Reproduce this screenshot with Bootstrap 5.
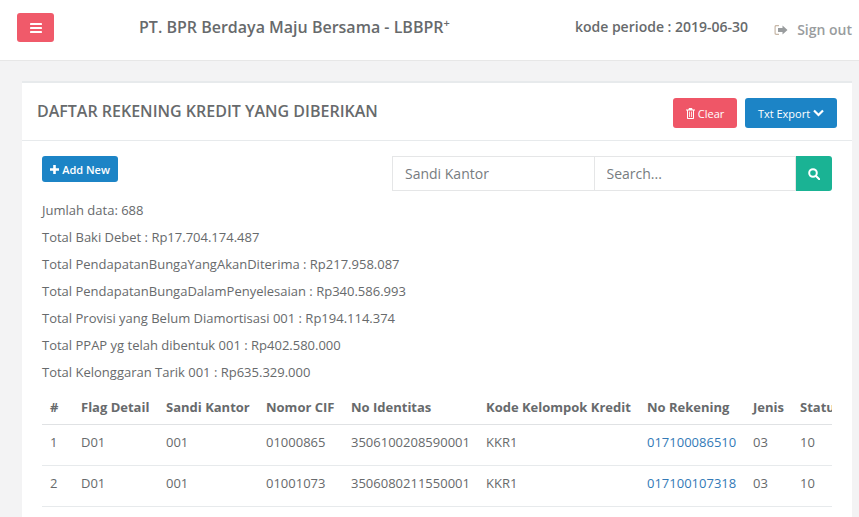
<!DOCTYPE html>
<html lang="id">
<head>
<meta charset="utf-8">
<title>Daftar Rekening Kredit</title>
<link href="https://cdn.jsdelivr.net/npm/bootstrap@5.3.0/dist/css/bootstrap.min.css" rel="stylesheet">
<style>
html,body{height:100%;overflow:hidden}
body{font-family:"Open Sans",sans-serif;font-size:13px;color:#676a6c;background:#f3f3f4;line-height:17px;display:flex;flex-direction:column}
.topbar{flex:0 0 61px;background:#fff;border-bottom:1px solid #e7e7e7;padding:13px 7px 0 17px;align-items:flex-start}
.btn-menu{width:37px;height:29px;padding:0;background:#f05a6a;border:0;border-radius:3px;color:#fff;display:flex;align-items:center;justify-content:center}
.brand-name{font-size:16px;font-weight:600;margin-left:85px;line-height:28px;color:#676a6c}
.brand-name sup{font-size:11px;top:-.55em;line-height:0}
.periode{font-size:14px;font-weight:600;line-height:28px;margin-left:auto;margin-right:26px}
.signout{font-size:14px;font-weight:600;color:#999c9e;line-height:34px;text-decoration:none;display:flex;align-items:center;gap:9px}
.panel{margin:20px 7px 0 22px;background:#fff;border-top:2px solid #e7eaec;flex:1 1 auto;overflow:hidden}
.panel-head{height:58px;padding:1px 15px 0;border-bottom:1px solid #e7eaec;display:flex;align-items:center;justify-content:space-between}
.panel-head h5{font-size:16px;font-weight:600;margin:0;color:#676a6c}
.head-btns{gap:8px;margin-top:2px}
.act{font-size:11px;height:30px;border:0;border-radius:3px;color:#fff;padding:0;display:inline-flex;align-items:center;justify-content:center;gap:3px;font-weight:500}
.act-red{width:64px;background:#ef5667}
.act-blue{width:92px;background:#1c84c6}
.panel-body{padding:15px 20px 0}
.add-btn{font-size:11px;height:26px;width:76px;background:#1c84c6;border:0;border-radius:3px;color:#fff;padding:0;display:inline-flex;align-items:center;justify-content:center;gap:3px;font-weight:600}
.find{width:440px;height:35px}
.find .form-control{font-family:inherit;font-size:14px;color:#676a6c;border:1px solid #e5e6e7;border-radius:0;padding:6px 12px;height:35px;box-shadow:none}
.find .form-control+.form-control{margin-left:-1px}
.find .form-control::placeholder{color:#777c80;opacity:1}
.find-btn{flex:0 0 36px;margin-left:0!important;background:#1ab394;border:0;border-radius:0 3px 3px 0;color:#fff;padding:0;display:flex;align-items:center;justify-content:center}
.stats{margin-top:11px}
.stats p{margin:0 0 10px;line-height:17px}
.tbl-wrap{overflow:hidden}
.tbl{margin:0;width:auto;color:#676a6c;font-size:13px;white-space:nowrap;border-collapse:collapse}
.tbl th,.tbl td{padding:5px 8px 11px;line-height:24px;border-top:0;border-bottom:1px solid #e7eaec;color:#676a6c;box-shadow:none;background:none;box-sizing:border-box}
.tbl th{font-weight:700;border-bottom:1px solid #e0e2e4;padding-top:4px;padding-bottom:5px}
.tbl th:nth-child(1){min-width:31px;width:31px}
.tbl th:nth-child(2){min-width:85px;width:85px}
.tbl th:nth-child(3){min-width:100px;width:100px}
.tbl th:nth-child(4){min-width:85px;width:85px}
.tbl th:nth-child(5){min-width:135px;width:135px}
.tbl th:nth-child(6){min-width:161px;width:161px}
.tbl th:nth-child(7){min-width:106px;width:106px}
.tbl th:nth-child(8){min-width:47px;width:47px}
.tbl a{color:#337ab7;text-decoration:none}
</style>
</head>
<body>
<header class="topbar d-flex">
  <button class="btn-menu" type="button" aria-label="Menu">
    <svg width="12" height="10" viewBox="0 0 12 10" fill="#fff"><rect width="12" height="2" y="0" rx=".4"/><rect width="12" height="2" y="4" rx=".4"/><rect width="12" height="2" y="8" rx=".4"/></svg>
  </button>
  <div class="brand-name">PT. BPR Berdaya Maju Bersama - LBBPR<sup>+</sup></div>
  <div class="periode">kode periode : 2019-06-30</div>
  <a class="signout" href="#">
    <svg width="14" height="12" viewBox="0 0 14 12" fill="#999c9e"><path d="M5 1H2.2C1.2 1 .5 1.7.5 2.7v6.6c0 1 .7 1.700 1.700 1.700H5V9.800H2.400c-.4 0-.7-.3-.7-.7V2.900c0-.4.3-.7.7-.7H5z" fill="#c8b8a8"/><path d="M8.500 1.500v2.500H4v4h4.500v2.500L13.500 6z"/></svg>
    Sign out
  </a>
</header>
<main class="panel">
  <div class="panel-head">
    <h5>DAFTAR REKENING KREDIT YANG DIBERIKAN</h5>
    <div class="head-btns d-flex">
      <button class="act act-red" type="button">
        <svg width="9" height="11" viewBox="0 0 9 11" fill="#fff"><path d="M3 0h3l.6 1.500H9v1H8V10c0 .6-.4 1-1 1H2c-.6 0-1-.4-1-1V2.500H0v-1h2.400zM2 2.500V10h5V2.500zM3 3.500h.8V9H3zm2.200 0H6V9h-.8z"/></svg>
        Clear
      </button>
      <button class="act act-blue" type="button">
        Txt Export
        <svg width="11" height="8" viewBox="0 0 11 8" fill="none" stroke="#fff" stroke-width="2.200"><path d="M1 1.500l4.500 4.500L10 1.500"/></svg>
      </button>
    </div>
  </div>
  <div class="panel-body">
    <div class="d-flex justify-content-between align-items-start">
      <button class="add-btn" type="button">
        <svg width="9" height="9" viewBox="0 0 9 9" fill="#fff"><path d="M3.200 0h2.600v3.200H9v2.600H5.800V9H3.200V5.800H0V3.200h3.200z"/></svg>
        Add New
      </button>
      <div class="find input-group flex-nowrap">
        <input class="form-control" type="text" placeholder="Sandi Kantor">
        <input class="form-control" type="text" placeholder="Search...">
        <button class="find-btn" type="button" aria-label="Search">
          <svg width="12" height="12" viewBox="0 0 12 12" fill="none" stroke="#fff" stroke-width="2"><circle cx="5" cy="5" r="3.800"/><path d="M8 8l3.300 3.300" stroke-linecap="round"/></svg>
        </button>
      </div>
    </div>
    <div class="stats">
      <p>Jumlah data: 688</p>
      <p>Total Baki Debet : Rp17.704.174.487</p>
      <p>Total PendapatanBungaYangAkanDiterima : Rp217.958.087</p>
      <p>Total PendapatanBungaDalamPenyelesaian : Rp340.586.993</p>
      <p>Total Provisi yang Belum Diamortisasi 001 : Rp194.114.374</p>
      <p>Total PPAP yg telah dibentuk 001 : Rp402.580.000</p>
      <p>Total Kelonggaran Tarik 001 : Rp635.329.000</p>
    </div>
    <div class="tbl-wrap">
      <table class="table tbl">
        <thead>
          <tr><th>#</th><th>Flag Detail</th><th>Sandi Kantor</th><th>Nomor CIF</th><th>No Identitas</th><th>Kode Kelompok Kredit</th><th>No Rekening</th><th>Jenis</th><th>Status</th></tr>
        </thead>
        <tbody>
          <tr><td>1</td><td>D01</td><td>001</td><td>01000865</td><td>3506100208590001</td><td>KKR1</td><td><a href="#">017100086510</a></td><td>03</td><td>10</td></tr>
          <tr><td>2</td><td>D01</td><td>001</td><td>01001073</td><td>3506080211550001</td><td>KKR1</td><td><a href="#">017100107318</a></td><td>03</td><td>10</td></tr>
        </tbody>
      </table>
    </div>
  </div>
</main>
</body>
</html>
